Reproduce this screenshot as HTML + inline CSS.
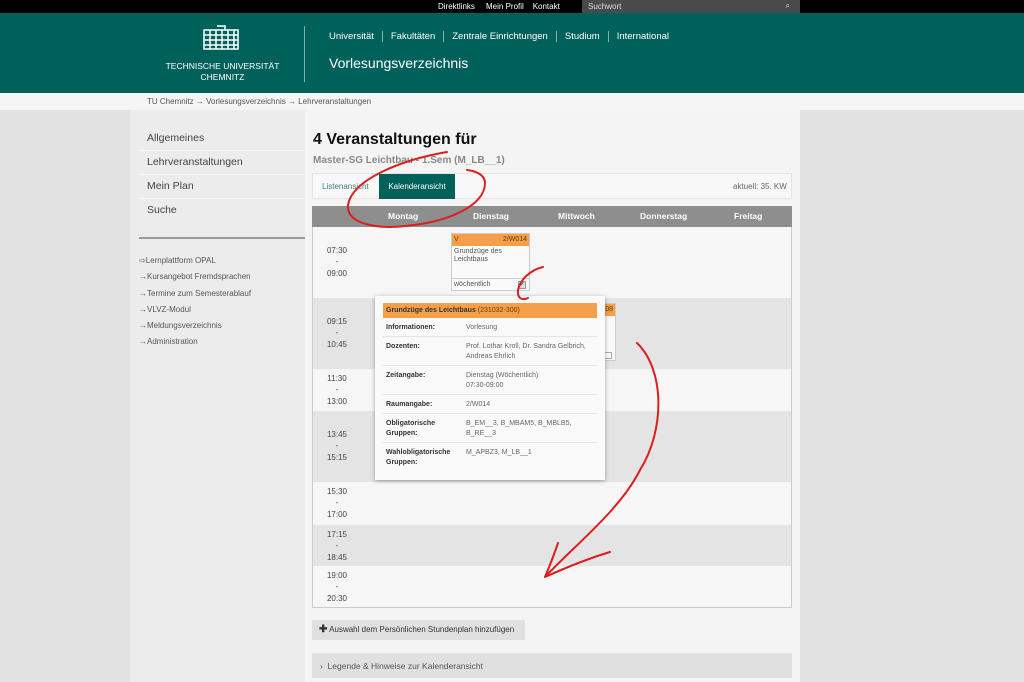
<!DOCTYPE html>
<html><head><meta charset="utf-8"><style>
*{margin:0;padding:0;box-sizing:border-box}
body{width:1024px;height:682px;overflow:hidden;background:#e2e2e2;font-family:"Liberation Sans",sans-serif;position:relative}
.a{position:absolute}
.t{font-size:8px;color:#333}
</style></head><body>
<div class="a" style="left:0;top:0;width:1024px;height:13px;background:#000"></div>
<div class="a" style="left:438px;top:2px;font-size:8px;color:#fff;white-space:nowrap">Direktlinks&nbsp;&nbsp;&nbsp;&nbsp;&nbsp;Mein Profil&nbsp;&nbsp;&nbsp;&nbsp;Kontakt</div>
<div class="a" style="left:582px;top:0;width:218px;height:13px;background:#4a4a4a;color:#ddd;font-size:8px;padding:2px 6px">Suchwort<span style="position:absolute;right:10px;top:1px">&#x2315;</span></div>
<div class="a" style="left:0;top:13px;width:1024px;height:80px;background:#00605a"></div>
<svg class="a" style="left:203px;top:25px" width="36" height="26"><g fill="none" stroke="#fff" stroke-width="1.5"><rect x="1" y="5" width="34" height="19"/><path d="M1 10H35M1 15H35M1 20H35M7 5V24M13 5V24M19 5V24M25 5V24M31 5V24M14 1H22V5"/></g></svg>
<div class="a" style="left:150px;top:61px;width:145px;text-align:center;color:#fff;font-size:8.5px;line-height:11px;white-space:nowrap">TECHNISCHE UNIVERSITÄT<br>CHEMNITZ</div>
<div class="a" style="left:304px;top:26px;width:1px;height:56px;background:#7fb0ab"></div>
<div class="a" style="left:329px;top:31px;color:#fff;font-size:9.5px;white-space:nowrap">Universität<span style="margin:0 8px;border-left:1px solid #7fb0ab"></span>Fakultäten<span style="margin:0 8px;border-left:1px solid #7fb0ab"></span>Zentrale Einrichtungen<span style="margin:0 8px;border-left:1px solid #7fb0ab"></span>Studium<span style="margin:0 8px;border-left:1px solid #7fb0ab"></span>International</div>
<div class="a" style="left:329px;top:55px;color:#fff;font-size:14px">Vorlesungsverzeichnis</div>
<div class="a" style="left:0;top:93px;width:1024px;height:17px;background:#f5f5f5"></div>
<div class="a" style="left:147px;top:97px;font-size:8px;color:#555">TU Chemnitz → Vorlesungsverzeichnis → Lehrveranstaltungen</div>
<div class="a" style="left:130px;top:110px;width:670px;height:572px;background:#ececec"></div>
<div class="a" style="left:305px;top:110px;width:495px;height:572px;background:#f4f4f4"></div>
<div class="a" style="left:139px;top:127px;width:166px;color:#444;font-size:10.5px">
<div style="height:24px;padding:5px 8px;border-bottom:1px solid #f6f6f6">Allgemeines</div>
<div style="height:24px;padding:5px 8px;border-bottom:1px solid #f6f6f6">Lehrveranstaltungen</div>
<div style="height:24px;padding:5px 8px;border-bottom:1px solid #f6f6f6">Mein Plan</div>
<div style="height:24px;padding:5px 8px">Suche</div></div>
<div class="a" style="left:139px;top:237px;width:166px;height:2px;background:#999"></div>
<div class="a" style="left:139px;top:253px;font-size:8px;color:#555;line-height:16.3px">⇨Lernplattform OPAL<br>→Kursangebot Fremdsprachen<br>→Termine zum Semesterablauf<br>→VLVZ-Modul<br>→Meldungsverzeichnis<br>→Administration</div>
<div class="a" style="left:313px;top:131px;font-size:16px;font-weight:bold;color:#111">4 Veranstaltungen für</div>
<div class="a" style="left:313px;top:155px;font-size:10px;font-weight:bold;color:#888">Master-SG Leichtbau - 1.Sem (M_LB__1)</div>
<div class="a" style="left:312px;top:173px;width:480px;height:26px;background:#f8f8f8;border:1px solid #e4e4e4"></div>
<div class="a" style="left:322px;top:182px;font-size:8px;color:#3d7f78">Listenansicht</div>
<div class="a" style="left:379px;top:174px;width:76px;height:25px;background:#00605a;color:#fff;font-size:8px;padding-top:8px;text-align:center">Kalenderansicht</div>
<div class="a" style="left:733px;top:182px;font-size:8px;color:#666">aktuell: 35. KW</div>
<div class="a" style="left:312px;top:206px;width:480px;height:402px;border:1px solid #ccc;background:#f6f6f6"></div>
<div class="a" style="left:312px;top:206px;width:480px;height:21px;background:#8e8e8e;color:#fff;font-size:8.5px;font-weight:bold">
<span class="a" style="left:76px;top:5px">Montag</span><span class="a" style="left:161px;top:5px">Dienstag</span><span class="a" style="left:246px;top:5px">Mittwoch</span><span class="a" style="left:328px;top:5px">Donnerstag</span><span class="a" style="left:422px;top:5px">Freitag</span></div>
<div class="a" style="left:313px;top:298px;width:478px;height:71px;background:#e4e4e4"></div>
<div class="a" style="left:313px;top:411px;width:478px;height:71px;background:#e4e4e4"></div>
<div class="a" style="left:313px;top:525px;width:478px;height:41px;background:#e4e4e4"></div>
<div class="a t" style="left:326px;width:22px;text-align:center;top:245px;line-height:11.3px;color:#444">07:30<br>-<br>09:00</div>
<div class="a t" style="left:326px;width:22px;text-align:center;top:316px;line-height:11.3px;color:#444">09:15<br>-<br>10:45</div>
<div class="a t" style="left:326px;width:22px;text-align:center;top:373px;line-height:11.3px;color:#444">11:30<br>-<br>13:00</div>
<div class="a t" style="left:326px;width:22px;text-align:center;top:429px;line-height:11.3px;color:#444">13:45<br>-<br>15:15</div>
<div class="a t" style="left:326px;width:22px;text-align:center;top:486px;line-height:11.3px;color:#444">15:30<br>-<br>17:00</div>
<div class="a t" style="left:326px;width:22px;text-align:center;top:529px;line-height:11.3px;color:#444">17:15<br>-<br>18:45</div>
<div class="a t" style="left:326px;width:22px;text-align:center;top:570px;line-height:11.3px;color:#444">19:00<br>-<br>20:30</div>
<div class="a" style="left:451px;top:233px;width:79px;height:58px;background:#fafafa;border:1px solid #ccc;font-size:7px;color:#555">
<div style="background:#f4a04a;height:12px;padding:2px;color:#6a3a00">V<span style="float:right">2/W014</span></div>
<div style="padding:2px;line-height:8px">Grundzüge des<br>Leichtbaus</div>
<div style="position:absolute;top:44px;left:0;right:0;border-top:1px solid #ccc;padding:2px">wöchentlich<span style="position:absolute;right:3px;top:2px;width:8px;height:8px;border:1px solid #999;background:#ddd;font-size:6px;line-height:7px;text-align:center">✔</span></div></div>
<div class="a" style="left:452px;top:303px;width:164px;height:58px;background:#fafafa;border:1px solid #ccc"><div style="background:#f4a04a;height:12px;font-size:7px;text-align:right;padding:2px;color:#6a3a00">08</div><div style="position:absolute;right:3px;top:48px;width:8px;height:7px;border:1px solid #aaa"></div></div>
<div class="a" style="left:375px;top:296px;width:230px;height:184px;background:#fafafa;box-shadow:0 1px 4px rgba(0,0,0,.35);font-size:7px;color:#666">
<div style="margin:7px 8px 0;background:#f4a04a;height:15px;padding:4px 3px;color:#6a3a00"><b style="color:#333">Grundzüge des Leichtbaus</b> (231032-300)</div>
<div style="margin:0 8px;line-height:10px">
<div style="display:flex;padding:5px 3px;border-bottom:1px solid #e4e4e4;height:19px"><b style="width:80px;color:#333">Informationen:</b>Vorlesung</div>
<div style="display:flex;padding:5px 3px;border-bottom:1px solid #e4e4e4;height:29px"><b style="width:80px;color:#333">Dozenten:</b><span>Prof. Lothar Kroll, Dr. Sandra Gelbrich,<br>Andreas Ehrlich</span></div>
<div style="display:flex;padding:5px 3px;border-bottom:1px solid #e4e4e4;height:29px"><b style="width:80px;color:#333">Zeitangabe:</b><span>Dienstag (Wöchentlich)<br>07:30-09:00</span></div>
<div style="display:flex;padding:5px 3px;border-bottom:1px solid #e4e4e4;height:19px"><b style="width:80px;color:#333">Raumangabe:</b>2/W014</div>
<div style="display:flex;padding:5px 3px;border-bottom:1px solid #e4e4e4;height:29px"><b style="width:80px;color:#333">Obligatorische<br>Gruppen:</b><span>B_EM__3, B_MBAM5, B_MBLB5,<br>B_RE__3</span></div>
<div style="display:flex;padding:5px 3px;height:29px"><b style="width:80px;color:#333">Wahlobligatorische<br>Gruppen:</b><span>M_APBZ3, M_LB__1</span></div>
</div></div>
<div class="a" style="left:312px;top:620px;width:213px;height:20px;background:#e0e0e0;font-size:8px;color:#333;padding:5px 7px"><b style="font-size:10px;line-height:8px">✚</b> Auswahl dem Persönlichen Stundenplan hinzufügen</div>
<div class="a" style="left:312px;top:653px;width:480px;height:25px;background:#e0e0e0;font-size:8.5px;color:#555;padding:8px 8px">›&nbsp; Legende &amp; Hinweise zur Kalenderansicht</div>
<svg class="a" style="left:0;top:0" width="1024" height="682"><g fill="none" stroke="#d91f1f" stroke-width="2" stroke-linecap="round">
<path d="M447 152C400 160 352 180 348 205C346 225 380 229 405 226C450 222 485 205 485 183C485 175 476 171 467 170"/>
<path d="M543 267C530 270 520 280 518 290C517 298 522 301 528 298"/>
<path d="M637 343C665 370 665 430 640 470C620 510 575 545 545 577M545 577C550 565 555 552 558 543M545 577C565 568 590 558 610 552"/>
</g></svg>
</body></html>
